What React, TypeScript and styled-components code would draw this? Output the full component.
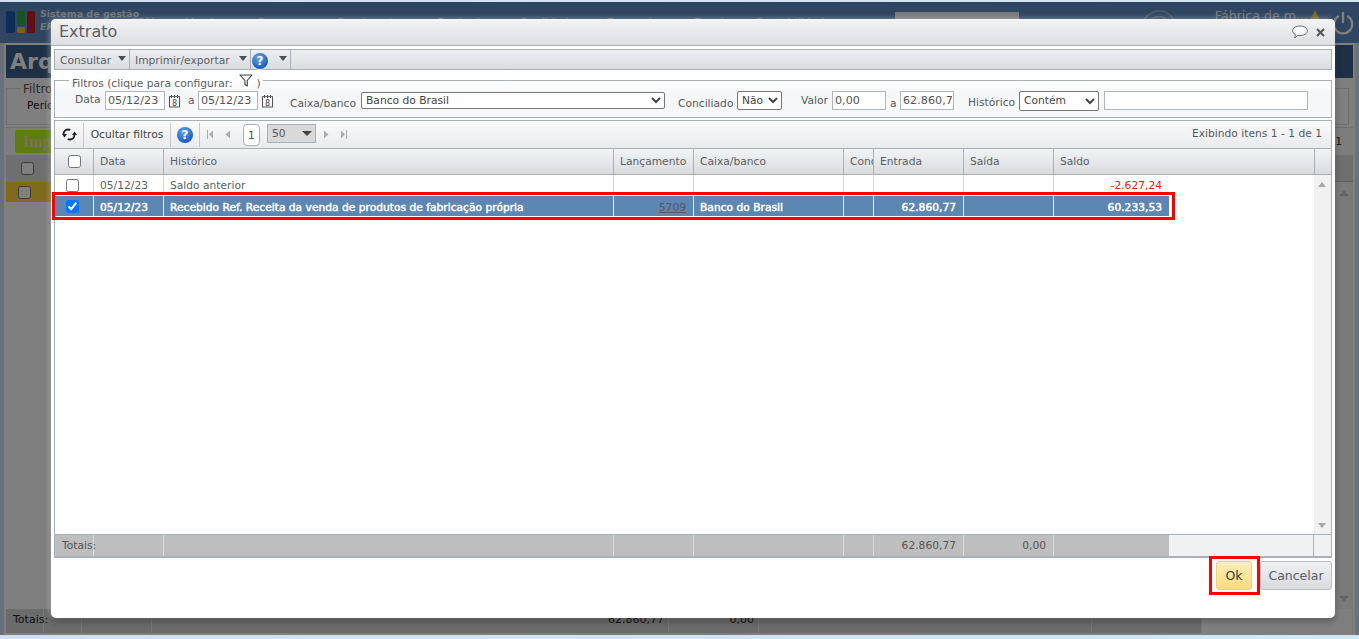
import React from "react";
import styled, { createGlobalStyle } from "styled-components";

const Global = createGlobalStyle`
  html, body { margin: 0; padding: 0; height: 639px; overflow: hidden; background: #d4e3f2; }
  body { font-family: "DejaVu Sans", Verdana, sans-serif; font-size: 10.7px; }
  #root { height: 639px; }
  * { box-sizing: border-box; }
`;

const Page = styled.div`
  position: relative;
  height: 639px;
  overflow: hidden;
  background: linear-gradient(90deg, #d4def2, #cfe9f3);
`;
const Backdrop = styled.div`
  height: 635px;
  padding-top: 2px;
  display: flex;
  flex-direction: column;
`;
const AppHeader = styled.header`
  height: 41px;
  background: #5c8cc2;
  display: flex;
  align-items: center;
  padding: 0 5px 0 6px;
  flex: none;
`;
const Brand = styled.div`
  width: 90px;
  margin-left: 4px;
  margin-top: -5px;
  color: #e4eaf0;
  font-size: 9.5px;
  line-height: 13px;
  font-weight: bold;
  flex: none;
  white-space: nowrap;
  em { display: block; }
`;
const Menu = styled.nav`
  display: flex;
  gap: 22px;
  width: 760px;
  overflow: hidden;
  color: #d8dde4;
  font-size: 11px;
  white-space: nowrap;
  flex: none;
`;
const SearchBox = styled.div`
  width: 124px;
  height: 18px;
  background: #fff;
  opacity: 0.9;
  margin-left: 5px;
  margin-top: -4px;
  flex: none;
`;
const TopRight = styled.div`
  flex: 1;
  display: flex;
  align-items: center;
  justify-content: flex-end;
  color: #f0f0f0;
  font-size: 12.6px;
  gap: 11px;
`;
const Company = styled.span`
  margin-bottom: 14px;
  margin-right: -10px;
  white-space: nowrap;
`;
const MainFrame = styled.main`
  flex: 1;
  margin: 0 4px;
  border: 2px solid #fff;
  background: #fff;
  display: flex;
  flex-direction: column;
  min-height: 0;
`;
const PageTitle = styled.div`
  height: 33px;
  background: #3a6088;
  color: #fff;
  font-size: 22px;
  font-weight: bold;
  line-height: 33px;
  padding-left: 4px;
  flex: none;
`;
const BackFilter = styled.div`
  height: 37px;
  margin: 10px 4px 0 0;
  border: 1px solid #ddd;
  padding: 6px 0 0 18px;
  color: #222;
  line-height: 14px;
  flex: none;
  position: relative;
  span { display: block; margin-left: 2px; margin-top: 4px; }
  b { position: absolute; top: -7px; left: 14px; font-weight: normal; background: #fff; padding: 0 2px; color: #555; font-size: 12px; }
`;
const BackToolbar = styled.div`
  height: 28px;
  margin-top: 2px;
  background: #fafafa;
  border-top: 1px solid #ddd;
  display: flex;
  align-items: center;
  justify-content: space-between;
  padding: 0 11px 0 9px;
  color: #333;
  flex: none;
`;
const GreenButton = styled.div`
  width: 70px;
  height: 23px;
  border-radius: 3px;
  background: #bcf81e;
  color: #f3e6a8;
  font: bold 16px/23px "Liberation Serif", serif;
  padding-left: 8px;
`;
const BackGrid = styled.div`
  flex: 1;
  display: flex;
  min-height: 0;
  background: #fff;
`;
const BackColumn = styled.div`
  flex: 1;
  min-width: 0;
`;
const BackHead = styled.div`
  height: 27px;
  background: #dedede;
  display: flex;
  align-items: center;
  padding-left: 15px;
`;
const BackRow = styled.div`
  height: 20px;
  background: #ffd834;
  display: flex;
  align-items: center;
  padding-left: 12px;
`;
const BackScroll = styled.div`
  width: 19px;
  background: #f4f4f4;
  border-left: 1px solid #ccc;
  position: relative;
  flex: none;
`;
const BackScrollHead = styled.div`
  height: 27px;
  background: #dedede;
  border-bottom: 1px solid #bbb;
`;
const BackTotals = styled.div`
  height: 24px;
  background: #d6d6d6;
  color: #222;
  display: grid;
  grid-template-columns: 38px 38px 70px 517px 90px 333px 110px 1fr;
  line-height: 22px;
  font-size: 11px;
  flex: none;
`;
const BackTotal = styled.div<{ $right?: boolean; $light?: boolean }>`
  border-right: 1px solid #ececec;
  padding: 0 ${(p) => (p.$right ? 4 : 0)}px 0 7px;
  text-align: ${(p) => (p.$right ? "right" : "left")};
  background: ${(p) => (p.$light ? "#fff" : "transparent")};
`;
const Overlay = styled.div`
  position: absolute;
  left: 0;
  right: 0;
  top: 2px;
  height: 633px;
  background: rgba(0, 0, 0, 0.5);
`;
const UpArrowBack = styled.div`
  position: absolute;
  left: 4px;
  top: 35px;
  border: 5px solid transparent;
  border-top: 0;
  border-bottom: 6px solid #ccc;
`;
const DownArrowBack = styled.div`
  position: absolute;
  left: 4px;
  bottom: 7px;
  border: 5px solid transparent;
  border-bottom: 0;
  border-top: 6px solid #ccc;
`;

/* dialog */
const Modal = styled.section`
  position: absolute;
  left: 51px;
  top: 19px;
  width: 1284px;
  height: 599px;
  background: #fff;
  border-radius: 5px;
  box-shadow: -2px -1px 5px rgba(255, 255, 255, 0.35), 0 3px 6px rgba(0, 0, 0, 0.35);
  display: flex;
  flex-direction: column;
  padding: 0 3px;
  color: #5a5f66;
`;
const TitleBar = styled.div`
  height: 27px;
  margin: 0 -3px;
  border-radius: 5px 5px 0 0;
  border-bottom: 1px solid #a9b0b9;
  background: linear-gradient(#f2f3f4, #dcdee2);
  display: flex;
  align-items: center;
  justify-content: space-between;
  padding: 0 10px 0 8px;
  flex: none;
`;
const Title = styled.h1`
  margin: 0;
  font-size: 16px;
  font-weight: normal;
  line-height: 30px;
  color: #5a5f66;
`;
const TitleIcons = styled.div`
  display: flex;
  align-items: center;
  gap: 8px;
`;
const MenuBar = styled.div`
  height: 21px;
  margin-top: 3px;
  border: 1px solid #a9b0b9;
  background: linear-gradient(#eceef0, #dadce0);
  display: flex;
  align-items: stretch;
  flex: none;
`;
const MenuItem = styled.div<{ $w: number; $tight?: boolean }>`
  width: ${(p) => p.$w}px;
  border-right: 1px solid #a9b0b9;
  display: flex;
  align-items: center;
  padding: 1px 3px 0 ${(p) => (p.$tight ? 1 : 5)}px;
  color: #5a5f66;
  white-space: nowrap;
  justify-content: space-between;
`;
const Caret = styled.span`
  width: 0;
  height: 0;
  border: 4px solid transparent;
  border-top: 5px solid #4a4f56;
  border-bottom: 0;
  margin-bottom: 3px;
  flex: none;
`;
const PageCaret = styled.span`
  width: 0;
  height: 0;
  border: 5px solid transparent;
  border-top: 5px solid #444;
  border-bottom: 0;
  flex: none;
`;
const HelpIcon = styled.span`
  width: 16px;
  height: 16px;
  border-radius: 50%;
  background: radial-gradient(circle at 40% 30%, #62a3ea, #1a5cb8 75%);
  box-shadow: 0 0 0 1px #e8eef6;
  color: #fff;
  font-weight: bold;
  font-size: 12px;
  line-height: 16px;
  text-align: center;
  flex: none;
`;
const MenuHelp = styled(HelpIcon)`
  margin-top: 1px;
`;
const Filters = styled.fieldset`
  margin: 3px 0 0;
  padding: 4px 0 7px 20px;
  border: 1px solid #a9b0b9;
  background: linear-gradient(#ffffff 0, #f6f7f8 10px);
  min-width: 0;
  display: block;
  flex: none;
`;
const FiltersLegend = styled.legend`
  margin-left: -6px;
  padding: 0 2px 0 3px;
  height: 14px;
  line-height: 21px;
  color: #5a5f66;
  white-space: nowrap;
  svg { vertical-align: 0; margin: 0 0 0 3px; }
`;
const FilterRow = styled.div`
  display: flex;
  align-items: center;
  height: 19px;
`;
const FieldLabel = styled.label<{ $w: number; $ml?: number; $down?: number; $up?: number }>`
  width: ${(p) => p.$w}px;
  margin-left: ${(p) => p.$ml ?? 0}px;
  padding-top: ${(p) => p.$down ?? 0}px;
  padding-bottom: ${(p) => p.$up ?? 0}px;
  white-space: nowrap;
  color: #555a60;
  flex: none;
`;
const TextField = styled.input<{ $w: number; $ml?: number }>`
  width: ${(p) => p.$w}px;
  margin-left: ${(p) => p.$ml ?? 0}px;
  height: 19px;
  border: 1px solid #b3b7bc;
  padding: 0 1px 0 2px;
  font: 11.2px "DejaVu Sans", sans-serif;
  color: #555;
  background: #fff;
  flex: none;
  outline: none;
`;
const SelectField = styled.select<{ $w: number; $ml?: number; $h?: number }>`
  width: ${(p) => p.$w}px;
  margin-left: ${(p) => p.$ml ?? 0}px;
  height: ${(p) => p.$h ?? 19}px;
  font: 10.7px "DejaVu Sans", sans-serif;
  color: #444;
  background: #fff;
  border: 1px solid #767676;
  border-radius: 2px;
  flex: none;
`;
const CalWrap = styled.span`
  margin-left: 3px;
  width: 13px;
  height: 14px;
  flex: none;
  display: flex;
`;
const Grid = styled.div`
  flex: 1;
  margin-top: 2px;
  border: 1px solid #a9b0b9;
  border-bottom: 2px solid #a9b0b9;
  display: flex;
  flex-direction: column;
  min-height: 0;
`;
const GridToolbar = styled.div`
  height: 28px;
  background: linear-gradient(#fbfbfb, #e9eaec);
  border-bottom: 1px solid #a9b0b9;
  display: flex;
  align-items: center;
  padding: 0 9px 0 0;
  flex: none;
`;
const ToolCell = styled.div<{ $w: number }>`
  width: ${(p) => p.$w}px;
  height: 24px;
  border-right: 1px solid #c4c8cd;
  display: flex;
  align-items: center;
  justify-content: center;
  white-space: nowrap;
  color: #444;
  flex: none;
`;
const PagerButton = styled.span<{ $ml: number }>`
  margin-left: ${(p) => p.$ml}px;
  display: flex;
  flex: none;
`;
const PageBox = styled.span`
  margin-left: 13px;
  width: 17px;
  height: 22px;
  border: 1px solid #a9b0b9;
  border-radius: 4px;
  background: #fff;
  text-align: center;
  line-height: 22px;
  color: #555;
  flex: none;
`;
const PageSize = styled.span`
  margin-left: 7px;
  width: 49px;
  height: 19px;
  margin-top: -3px;
  border: 1px solid #a9b0b9;
  background: #d9d9d9;
  padding: 0 3px 0 4px;
  color: #555;
  display: flex;
  align-items: center;
  justify-content: space-between;
  flex: none;
`;
const PagerInfo = styled.span`
  margin-left: auto;
  color: #555a60;
  white-space: nowrap;
  margin-top: -2px;
`;
const HeadRow = styled.div`
  display: grid;
  grid-template-columns: 39px 70px 450px 80px 150px 30px 90px 90px 261px 1fr;
  height: 26px;
  background: linear-gradient(#f2f3f4, #d9dbdf);
  border-bottom: 1px solid #a9b0b9;
  flex: none;
`;
const HeadCell = styled.div`
  border-right: 1px solid #a9b0b9;
  padding-left: 6px;
  line-height: 25px;
  overflow: hidden;
  white-space: nowrap;
  color: #5a5f66;
  &:last-child { border-right: 0; }
`;
const CheckHead = styled(HeadCell)`
  padding: 0;
  display: flex;
  align-items: center;
  justify-content: center;
`;
const Box = styled.input`
  margin: 0;
  width: 13px;
  height: 13px;
  accent-color: #0075ff;
`;
const BodyWrap = styled.div`
  flex: 1;
  display: flex;
  min-height: 0;
  background: #fff;
`;
const Rows = styled.div`
  flex: 1;
  min-width: 0;
`;
const Row = styled.div<{ $sel?: boolean }>`
  display: grid;
  grid-template-columns: 39px 70px 450px 80px 150px 30px 90px 90px 115px;
  width: max-content;
  height: 20px;
  margin-bottom: 1px;
  line-height: ${(p) => (p.$sel ? 23 : 21)}px;
  background: ${(p) => (p.$sel ? "#5c87b2" : "#fff")};
  color: ${(p) => (p.$sel ? "#fff" : "#5a5f66")};
  -webkit-text-stroke: ${(p) => (p.$sel ? "0.45px #fff" : "0")};
`;
const Cell = styled.div<{ $right?: boolean; $sel?: boolean; $red?: boolean; $last?: boolean }>`
  border-right: ${(p) => (p.$last ? 0 : 1)}px solid ${(p) => (p.$sel ? "#e4ebf2" : "#d6d8da")};
  padding: ${(p) => (p.$right ? "0 7px 0 0" : "0 0 0 6px")};
  text-align: ${(p) => (p.$right ? "right" : "left")};
  color: ${(p) => (p.$red ? "#f01414" : "inherit")};
  overflow: hidden;
  white-space: nowrap;
`;
const CheckCell = styled(Cell)`
  padding: 0 4px 0 0;
  display: flex;
  align-items: center;
  justify-content: center;
`;
const DocLink = styled.a`
  color: #4c5c6e;
  -webkit-text-stroke: 0;
  text-decoration: underline;
`;
const Scroller = styled.div`
  width: 17px;
  background: #f1f1f1;
  position: relative;
  flex: none;
`;
const ScrollUp = styled.span`
  position: absolute;
  top: 7px;
  left: 4px;
  border: 4px solid transparent;
  border-top: 0;
  border-bottom: 5px solid #a8a8a8;
`;
const ScrollDown = styled.span`
  position: absolute;
  bottom: 6px;
  left: 4px;
  border: 4px solid transparent;
  border-bottom: 0;
  border-top: 5px solid #a8a8a8;
`;
const TotalsRow = styled.div`
  display: grid;
  grid-template-columns: 39px 70px 450px 80px 150px 30px 90px 90px 115px 145px 1fr;
  height: 22px;
  line-height: 21px;
  border-top: 1px solid #a9b0b9;
  background: #f0f1f3;
  flex: none;
`;
const TotalCell = styled.div<{ $right?: boolean; $plain?: boolean }>`
  background: ${(p) => (p.$plain ? "transparent" : "#bebebe")};
  border-right: 1px solid ${(p) => (p.$plain ? "#a9b0b9" : "#d8d8d8")};
  padding: ${(p) => (p.$right ? "0 7px 0 0" : "0 0 0 6px")};
  text-align: ${(p) => (p.$right ? "right" : "left")};
  color: #555;
  white-space: nowrap;
  &:first-child { position: relative; z-index: 1; padding-left: 7px; }
  &:nth-child(9) { border-right: 0; }
  &:last-child { border-right: 0; }
`;
const Actions = styled.div`
  display: flex;
  justify-content: flex-end;
  gap: 8px;
  padding: 3px 0 28px;
  flex: none;
`;
const Button = styled.button<{ $primary?: boolean }>`
  height: 29px;
  width: ${(p) => (p.$primary ? 36 : 72)}px;
  border-radius: 3px;
  border: 1px solid ${(p) => (p.$primary ? "#ecd673" : "#b9bdc3")};
  background: ${(p) => (p.$primary ? "linear-gradient(#fcf0b8, #f8db7c)" : "linear-gradient(#eff0f2, #d9dbdf)")};
  color: ${(p) => (p.$primary ? "#3a3a3a" : "#5a5f66")};
  font: 12.5px "DejaVu Sans", sans-serif;
  padding: 0;
`;
const RowMark = styled.div`
  position: absolute;
  left: 1px;
  top: 173px;
  width: 1123px;
  height: 28px;
  border: 3px solid #ff0000;
  pointer-events: none;
`;
const OkMark = styled.div`
  position: absolute;
  left: 1158px;
  top: 537px;
  width: 51px;
  height: 39px;
  border: 3px solid #ff0000;
  pointer-events: none;
`;

const Calendar = () => (
  <CalWrap>
    <svg width="13" height="14" viewBox="0 0 13 14">
      <rect x="1.500" y="2.500" width="10" height="10.500" fill="#fff" stroke="#555" />
      <path d="M3.500 1v3M6.500 1v3M9.500 1v3" stroke="#444" />
      <path d="M1 2.500h11" stroke="#666" />
      <text x="6.500" y="11.500" fontSize="8" fontFamily="DejaVu Sans" textAnchor="middle" fill="#444">8</text>
    </svg>
  </CalWrap>
);
const Funnel = () => (
  <svg width="14" height="13" viewBox="0 0 14 13">
    <path d="M1 1h12L8.300 6.500V12L5.900 10.500V6.500z" fill="#f4f5f6" stroke="#444" strokeWidth="1.100" strokeLinejoin="round" />
  </svg>
);
const First = ({ flip }: { flip?: boolean }) => (
  <svg width="6" height="9" viewBox="0 0 6 9" style={flip ? { transform: "scaleX(-1)" } : undefined}>
    <path d="M0.500 0v9" stroke="#a9adb2" />
    <path d="M6 0.500v8L2 4.500z" fill="#a9adb2" />
  </svg>
);
const Prev = ({ flip }: { flip?: boolean }) => (
  <svg width="5" height="9" viewBox="0 0 5 9" style={flip ? { transform: "scaleX(-1)" } : undefined}>
    <path d="M5 0.500v8L0.500 4.500z" fill="#a9adb2" />
  </svg>
);

export default function App() {
  return (
    <Page>
      <Global />
      <Backdrop>
        <AppHeader>
          <svg width="30" height="23" viewBox="0 0 30 23">
            <rect x="0" y="0" width="9" height="22" rx="2" fill="#1e5ab0" />
            <rect x="11" y="0" width="8" height="15" rx="2" fill="#34a83c" />
            <rect x="11" y="16" width="8" height="6" rx="1.500" fill="#f2c21c" />
            <rect x="21" y="0" width="8" height="22" rx="2" fill="#c81c1c" />
          </svg>
          <Brand>
            Sistema de gestão
            <em>ERP</em>
          </Brand>
          <Menu>
            <span>CRM ▾</span><span>Vendas ▾</span><span>Compras ▾</span><span>Suprimentos ▾</span>
            <span>Produção ▾</span><span>Qualidade ▾</span><span>Financeiro ▾</span><span>Fiscal ▾</span>
            <span>Contabilidade ▾</span>
          </Menu>
          <SearchBox />
          <TopRight>
            <svg width="36" height="36" viewBox="0 0 36 36" style={{ marginRight: 27, marginTop: 10 }}>
              <circle cx="18" cy="18" r="17" fill="none" stroke="#a8b4c0" strokeWidth="1.500" />
              <path d="M8 18a10 10 0 0 1 20-3" fill="none" stroke="#a8b4c0" strokeWidth="1.500" />
            </svg>
            <Company>Fábrica de m...</Company>
            <svg width="12" height="13" viewBox="0 0 12 13" style={{ marginBottom: 14 }}>
              <path d="M6 1l5.500 11H.5z" fill="#f2c84a" />
            </svg>
            <svg width="22" height="24" viewBox="0 0 24 26">
              <path d="M12 2v10" stroke="#fff" strokeWidth="2.600" strokeLinecap="round" />
              <path d="M6.500 6a10 10 0 1 0 11 0" fill="none" stroke="#fff" strokeWidth="2.600" strokeLinecap="round" />
            </svg>
          </TopRight>
        </AppHeader>
        <MainFrame>
          <PageTitle>Arquivos</PageTitle>
          <BackFilter>
            <b>Filtros</b>
            <span>Período</span>
          </BackFilter>
          <BackToolbar>
            <GreenButton>Importar</GreenButton>
            <span>1</span>
          </BackToolbar>
          <BackGrid>
            <BackColumn>
              <BackHead><Box type="checkbox" readOnly /></BackHead>
              <BackRow><Box type="checkbox" readOnly /></BackRow>
            </BackColumn>
            <BackScroll>
              <BackScrollHead />
              <UpArrowBack />
              <DownArrowBack />
            </BackScroll>
          </BackGrid>
          <BackTotals>
            <BackTotal>Totais:</BackTotal>
            <BackTotal />
            <BackTotal />
            <BackTotal $right>62.860,77</BackTotal>
            <BackTotal $right>0,00</BackTotal>
            <BackTotal />
            <BackTotal />
            <BackTotal $light />
          </BackTotals>
        </MainFrame>
      </Backdrop>
      <Overlay />
      <Modal>
        <TitleBar>
          <Title>Extrato</Title>
          <TitleIcons>
            <svg width="16" height="14" viewBox="0 0 16 14">
              <path d="M8 1c4 0 7.300 1.900 7.300 4.800S12 10.500 8 10.500c-.8 0-1.500-.1-2.200-.2L2.800 13l.6-3.500C1.600 8.600.7 7.300.7 5.800.7 2.900 4 1 8 1z" fill="#f8f9fa" stroke="#5a5f66" strokeWidth=".9" />
            </svg>
            <svg width="9" height="9" viewBox="0 0 9 9">
              <path d="M1 1l7 7M8 1l-7 7" stroke="#555" strokeWidth="2" />
            </svg>
          </TitleIcons>
        </TitleBar>
        <MenuBar>
          <MenuItem $w={75}>Consultar<Caret /></MenuItem>
          <MenuItem $w={121}>Imprimir/exportar<Caret /></MenuItem>
          <MenuItem $w={40} $tight><MenuHelp>?</MenuHelp><Caret /></MenuItem>
        </MenuBar>
        <Filters>
          <FiltersLegend>Filtros (clique para configurar: <Funnel /> )</FiltersLegend>
          <FilterRow>
            <FieldLabel $w={26} $up={2}>Data</FieldLabel>
            <TextField $w={60} $ml={4} defaultValue="05/12/23" />
            <Calendar />
            <FieldLabel $w={5} $ml={7}>a</FieldLabel>
            <TextField $w={60} $ml={5} defaultValue="05/12/23" />
            <Calendar />
            <FieldLabel $w={66} $ml={16} $down={6}>Caixa/banco</FieldLabel>
            <SelectField $w={304} $ml={5} $h={17} defaultValue="bb">
              <option value="bb">Banco do Brasil</option>
            </SelectField>
            <FieldLabel $w={55} $ml={13} $down={6}>Conciliado</FieldLabel>
            <SelectField $w={45} $ml={4} defaultValue="n">
              <option value="n">Não</option>
            </SelectField>
            <FieldLabel $w={26} $ml={19}>Valor</FieldLabel>
            <TextField $w={54} $ml={5} defaultValue="0,00" />
            <FieldLabel $w={5} $ml={4} $down={5}>a</FieldLabel>
            <TextField $w={54} $ml={5} defaultValue="62.860,77" />
            <FieldLabel $w={46} $ml={14} $down={4}>Histórico</FieldLabel>
            <SelectField $w={80} $ml={5} $h={20} defaultValue="c">
              <option value="c">Contém</option>
            </SelectField>
            <TextField $w={204} $ml={5} />
          </FilterRow>
        </Filters>
        <Grid>
          <GridToolbar>
            <ToolCell $w={29}>
              <svg width="15" height="13" viewBox="0 0 15 13">
                <path d="M1.500 6.500C1.500 3.500 3.500 1.500 6 1.500c1 0 1.700.2 2.300.6" fill="none" stroke="#222" strokeWidth="1.800" />
                <path d="M0 6h5L2.500 9.500z" fill="#222" />
                <path d="M12.500 6.500c0 3-2 5-4.500 5-1 0-1.700-.2-2.300-.6" fill="none" stroke="#222" strokeWidth="1.800" />
                <path d="M10 7h5L12.500 3.500z" fill="#222" />
              </svg>
            </ToolCell>
            <ToolCell $w={87}>Ocultar filtros</ToolCell>
            <ToolCell $w={29}><HelpIcon>?</HelpIcon></ToolCell>
            <PagerButton $ml={7}><First /></PagerButton>
            <PagerButton $ml={12}><Prev /></PagerButton>
            <PageBox>1</PageBox>
            <PageSize>50<PageCaret /></PageSize>
            <PagerButton $ml={8}><Prev flip /></PagerButton>
            <PagerButton $ml={12}><First flip /></PagerButton>
            <PagerInfo>Exibindo itens 1 - 1 de 1</PagerInfo>
          </GridToolbar>
          <HeadRow>
            <CheckHead><Box type="checkbox" readOnly /></CheckHead>
            <HeadCell>Data</HeadCell>
            <HeadCell>Histórico</HeadCell>
            <HeadCell>Lançamento</HeadCell>
            <HeadCell>Caixa/banco</HeadCell>
            <HeadCell>Conciliado</HeadCell>
            <HeadCell>Entrada</HeadCell>
            <HeadCell>Saída</HeadCell>
            <HeadCell>Saldo</HeadCell>
            <HeadCell />
          </HeadRow>
          <BodyWrap>
            <Rows>
              <Row>
                <CheckCell><Box type="checkbox" readOnly /></CheckCell>
                <Cell>05/12/23</Cell>
                <Cell>Saldo anterior</Cell>
                <Cell />
                <Cell />
                <Cell />
                <Cell />
                <Cell />
                <Cell $right $red $last>-2.627,24</Cell>
              </Row>
              <Row $sel>
                <CheckCell $sel><Box type="checkbox" checked readOnly /></CheckCell>
                <Cell $sel>05/12/23</Cell>
                <Cell $sel>Recebido Ref. Receita da venda de produtos de fabricação própria</Cell>
                <Cell $sel $right><DocLink>5709</DocLink></Cell>
                <Cell $sel>Banco do Brasil</Cell>
                <Cell $sel />
                <Cell $sel $right>62.860,77</Cell>
                <Cell $sel />
                <Cell $sel $right $last>60.233,53</Cell>
              </Row>
            </Rows>
            <Scroller>
              <ScrollUp />
              <ScrollDown />
            </Scroller>
          </BodyWrap>
          <TotalsRow>
            <TotalCell>Totais:</TotalCell>
            <TotalCell />
            <TotalCell />
            <TotalCell />
            <TotalCell />
            <TotalCell />
            <TotalCell $right>62.860,77</TotalCell>
            <TotalCell $right>0,00</TotalCell>
            <TotalCell />
            <TotalCell $plain />
            <TotalCell $plain />
          </TotalsRow>
        </Grid>
        <Actions>
          <Button $primary>Ok</Button>
          <Button>Cancelar</Button>
        </Actions>
        <RowMark />
        <OkMark />
      </Modal>
    </Page>
  );
}
